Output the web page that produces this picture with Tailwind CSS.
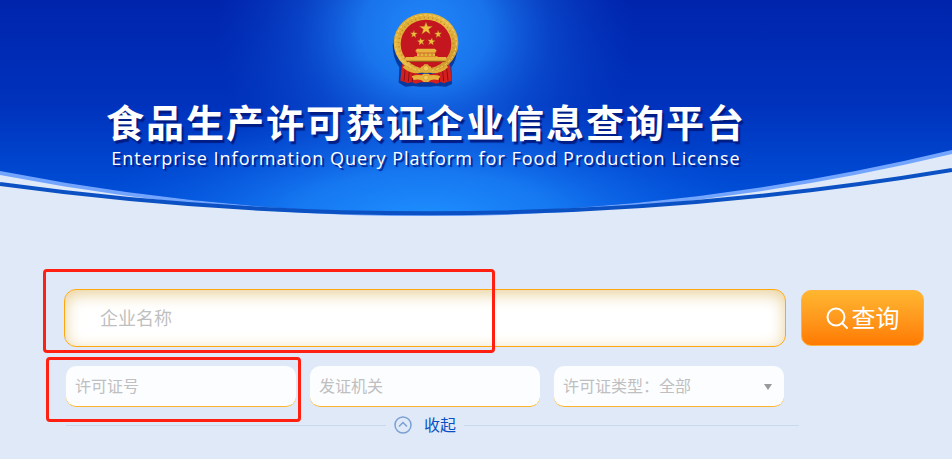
<!DOCTYPE html>
<html lang="zh-CN">
<head>
    <meta charset="UTF-8">
    <meta name="viewport" content="width=device-width, initial-scale=1.0">
    <title>食品生产许可获证企业信息查询平台</title>
    <script src="https://cdn.jsdelivr.net/npm/@tailwindcss/browser@4"></script>
</head>
<body class="min-h-screen bg-[#dfe9f8] font-['Noto_Sans','Noto_Sans_CJK_SC',sans-serif]">
    <header class="relative h-[216px] overflow-hidden">
        <!-- banner background with the curved lower edge -->
        <svg class="absolute inset-0 w-full h-full" viewBox="0 0 952 216" preserveAspectRatio="none" aria-hidden="true">
            <defs>
                <linearGradient id="base" x1="0" y1="0" x2="0" y2="1">
                    <stop offset="0" stop-color="#0024ac"/>
                    <stop offset="0.5" stop-color="#0033bd"/>
                    <stop offset="1" stop-color="#0054dc"/>
                </linearGradient>
                <radialGradient id="topGlow" gradientUnits="userSpaceOnUse" cx="0" cy="0" r="1" gradientTransform="translate(425 30) scale(210 185)">
                    <stop offset="0" stop-color="#2188fa"/>
                    <stop offset="0.3" stop-color="#1c7cf2" stop-opacity="0.9"/>
                    <stop offset="0.6" stop-color="#1262e0" stop-opacity="0.45"/>
                    <stop offset="1" stop-color="#0a48cc" stop-opacity="0"/>
                </radialGradient>
                <radialGradient id="bottomGlow" gradientUnits="userSpaceOnUse" cx="0" cy="0" r="1" gradientTransform="translate(425 222) scale(330 125)">
                    <stop offset="0" stop-color="#1f90ff"/>
                    <stop offset="0.4" stop-color="#1a80f6" stop-opacity="0.85"/>
                    <stop offset="1" stop-color="#0a58e0" stop-opacity="0"/>
                </radialGradient>
            </defs>
            <path d="M0 0H952V154Q476 267 0 175Z" fill="#73a5ff"/>
            <path d="M0 0H952V150Q476 264 0 171Z" fill="url(#base)"/>
            <path d="M0 0H952V150Q476 264 0 171Z" fill="url(#topGlow)"/>
            <path d="M0 0H952V150Q476 264 0 171Z" fill="url(#bottomGlow)"/>
            <path d="M0 184Q476 249 952 170" fill="none" stroke="#0b51c3" stroke-width="4"/>
        </svg>

        <div class="relative flex flex-col items-center pt-3 pr-[100px] text-white">
            <svg class="w-[68px] h-[75px]" viewBox="36 34 204 225" role="img" aria-label="国徽">
                <defs>
                    <linearGradient id="gold" x1="0" y1="0" x2="1" y2="1">
                        <stop offset="0" stop-color="#d9a62c"/>
                        <stop offset="0.5" stop-color="#e9bb45"/>
                        <stop offset="1" stop-color="#c68c22"/>
                    </linearGradient>
                </defs>
                <path d="M38 132a98 90 0 0 1 194 0q0 44-18 68l2 50-18 8-30-2-16 2h-34l-18-2-24 2-20-12 2-46q-20-28-20-68z" fill="#063a9e"/>
                <ellipse cx="138" cy="127" rx="97" ry="90" fill="url(#gold)"/>
                <ellipse cx="138" cy="127" rx="82" ry="76" fill="none" stroke="#c08a2a" stroke-width="5" stroke-dasharray="3 10"/>
                <ellipse cx="138" cy="127" rx="91" ry="84" fill="none" stroke="#f4d26a" stroke-width="3" stroke-dasharray="8 6"/>
                <ellipse cx="138" cy="130" rx="76" ry="73" fill="#c4161f"/>
                <g fill="#f3bd3d" stroke="#96501a" stroke-width="1">
                    <path d="M138 64l5 13h15l-12 9 5 15-13-9-13 9 5-15-12-9h15z"/>
                    <path d="M102 88l2 8 9 1-7 5 2 9-7-5-7 4 3-8-6-6h8z"/>
                    <path d="M174 88l-2 8-9 1 7 5-2 9 7-5 7 4-3-8 6-6h-8z"/>
                    <path d="M121 111l4 7 9-1-6 7 4 8-8-4-7 6 1-9-7-5 8-1z"/>
                    <path d="M156 111l-4 7-9-1 6 7-4 8 8-4 7 6-1-9 7-5-8-1z"/>
                </g>
                <!-- gate tower -->
                <path d="M111 144h54l6 8h-66zM109 152h58v4h-58zM111 158h54v8h-54zM103 167h70v14h-70zM77 169h26v12H77zM173 169h26v12h-26z" fill="#e8b43c"/>
                <path d="M77 180h122l-4 4H81z" fill="#9b5b17"/>
                <path d="M120 158v8M132 158v8M144 158v8M156 158v8" stroke="#a56a1d" stroke-width="2"/>
                <!-- ribbon, cog and drapes -->
                <path d="M66 190q10 8 20 10l16 16 20 4h32l20-4 16-16q10-2 20-10l5 50-14 4-8 4-12-4-12 5-14-4h-34l-14 4-12-5-12 4-8-4-14-4z" fill="#d3201f"/>
                <path d="M76 202l-4 38M88 208l-3 34M200 202l4 38M188 208l3 34M99 218l-2 26M177 218l2 26" stroke="#900d14" stroke-width="3"/>
                <path d="M76 192q18 18 44 18l3-12 6-2 4-5h10l4 5 6 2 3 12q26 0 44-18l4 8q-18 18-46 18l-12-3h-20l-12 3q-28 0-46-18z" fill="#e0ae39"/>
                <path d="M95 226q16-4 30-2l6-5h14l6 5q14-2 30 2l-6 12q-14-3-24 1l-6 5h-14l-6-5q-10-4-24-1z" fill="#e6b23a"/>
                <circle cx="138" cy="203" r="8" fill="#f1c857" stroke="#b57a22" stroke-width="1"/>
                <circle cx="138" cy="231" r="7" fill="#f3cc5c" stroke="#b57a22" stroke-width="1"/>
            </svg>
            <h1 class="mt-[10px] text-[38px] leading-[50px] tracking-[2px] font-bold whitespace-nowrap [text-shadow:2px_3px_1px_#001c85]">食品生产许可获证企业信息查询平台</h1>
            <p class="text-[18px] leading-[22px] tracking-[1px] font-['Open_Sans','Noto_Sans',sans-serif] whitespace-nowrap [text-shadow:2px_2px_1px_#001c85]">Enterprise Information Query Platform for Food Production License</p>
        </div>
    </header>

    <form class="pt-[73px] pl-16 pr-7" onsubmit="return false">
        <div class="flex items-center gap-[15px]">
            <div class="relative flex-1">
                <input type="text" aria-label="企业名称" placeholder="企业名称" class="block w-full h-[58px] px-[35px] rounded-xl border border-[#ffa70f] bg-white text-[18px] text-gray-700 placeholder:text-[#bfbfbf] outline-none shadow-[inset_0_4px_16px_#e8cf96]">
                <div class="absolute -top-5 -left-[21px] w-[452px] h-[84px] border-3 border-[#ff2012] rounded-sm pointer-events-none"></div>
            </div>
            <button type="submit" class="flex items-center justify-center gap-1 w-[123px] h-14 rounded-[10px] border border-[#ffb140] bg-linear-to-b from-[#ffb62f] to-[#ff7a00] text-[24px] text-white">
                <svg class="w-[22px] h-[22px]" viewBox="0 0 22 22" fill="none" stroke="currentColor" stroke-width="2" stroke-linecap="round" aria-hidden="true">
                    <circle cx="10" cy="10" r="8.5"/>
                    <path d="M16 16l5 5"/>
                </svg>
                查询
            </button>
        </div>

        <div class="mt-[19px] ml-0.5 mr-[140px]">
            <div class="grid grid-cols-3 gap-[14px] text-[16px]">
                <div class="relative">
                    <input type="text" aria-label="许可证号" placeholder="许可证号" class="block w-full h-[41px] px-[9px] rounded-[10px] border-b border-[#ffb52b] bg-[#fcfdff] placeholder:text-[#bfbfbf] outline-none">
                    <div class="absolute -top-[9px] -left-5 -right-[5px] -bottom-[15px] border-3 border-[#ff2012] rounded-sm pointer-events-none"></div>
                </div>
                <input type="text" aria-label="发证机关" placeholder="发证机关" class="block w-full h-[41px] px-[9px] rounded-[10px] border-b border-[#ffb52b] bg-[#fcfdff] placeholder:text-[#bfbfbf] outline-none">
                <div class="relative">
                    <select aria-label="许可证类型" class="block appearance-none w-full h-[41px] px-[9px] rounded-[10px] border-b border-[#ffb52b] bg-[#fcfdff] text-[#bfbfbf] outline-none">
                        <option>许可证类型：全部</option>
                    </select>
                    <svg class="absolute right-3 top-[18px] w-2 h-[6px] pointer-events-none" viewBox="0 0 8 6" aria-hidden="true"><path d="M0 0h8L4 6z" fill="#999"/></svg>
                </div>
            </div>

            <div class="flex items-center mt-[6px] -mr-[15px]">
                <hr class="flex-[320] border-[#cad8e9]">
                <button type="button" class="flex items-center gap-3 px-2 text-[16px] leading-6 text-[#0b4fc4]">
                    <svg class="w-[18px] h-[18px]" viewBox="0 0 18 18" fill="none" stroke="#7ba0d3" stroke-width="1.5" aria-hidden="true">
                        <circle cx="9" cy="9" r="8"/>
                        <path d="M5 10.5l4-4 4 4"/>
                    </svg>
                    收起
                </button>
                <hr class="flex-[335] border-[#cad8e9]">
            </div>
        </div>
    </form>
</body>
</html>
